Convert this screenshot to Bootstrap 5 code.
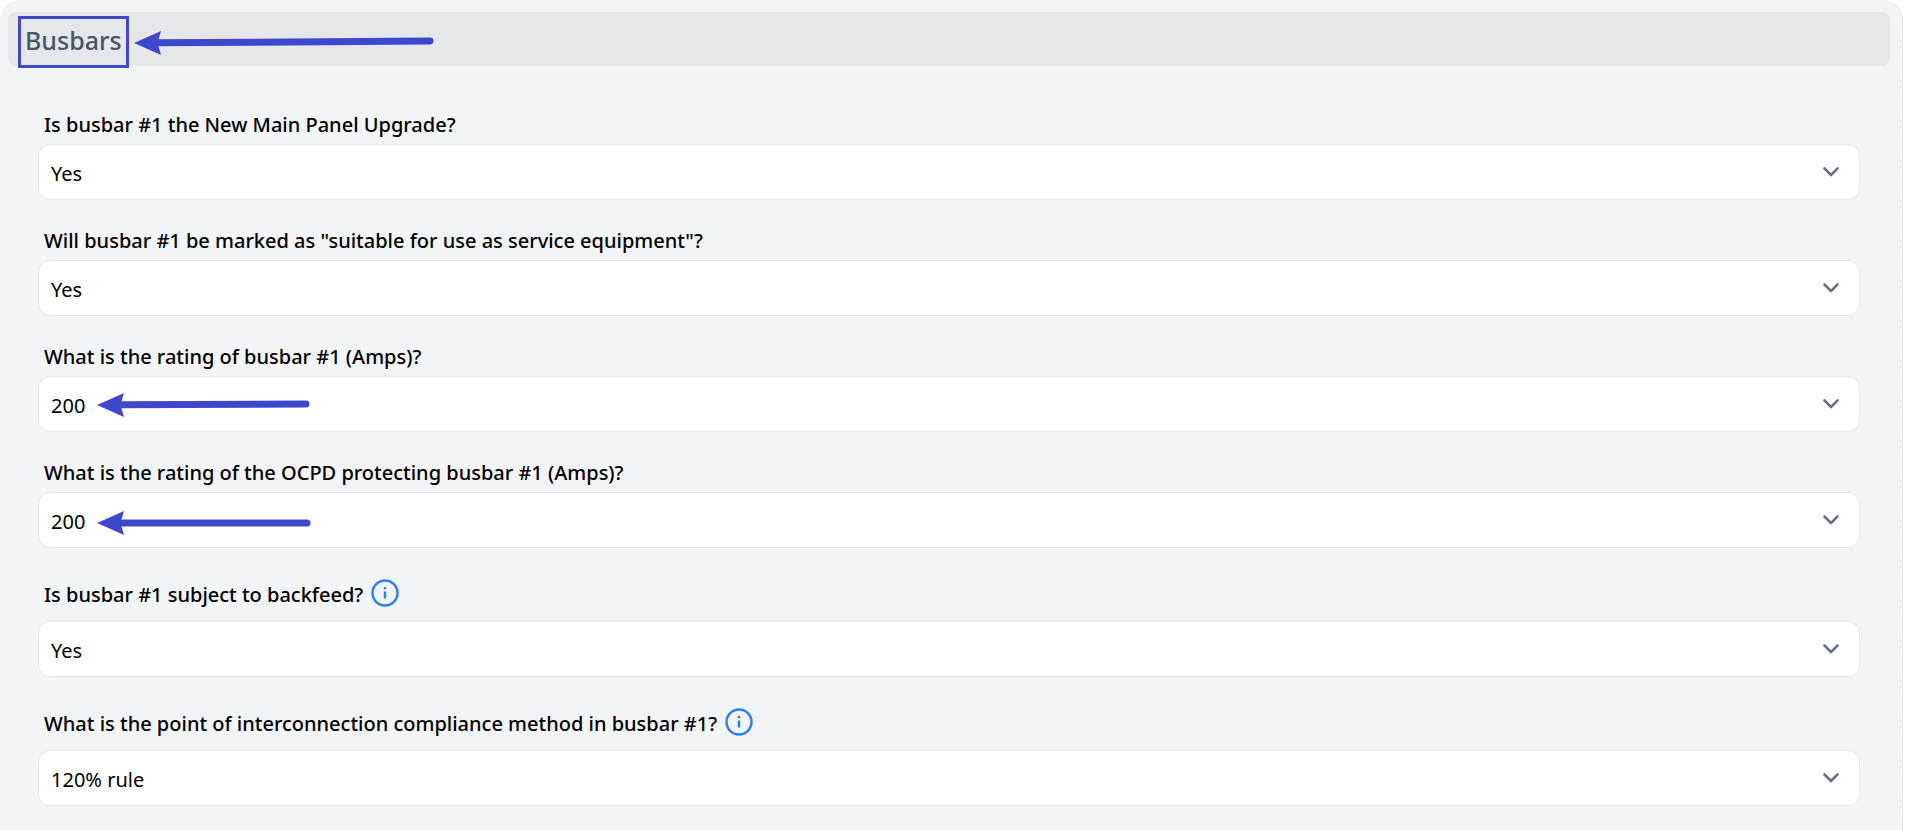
<!DOCTYPE html>
<html lang="en">
<head>
<meta charset="utf-8">
<meta name="viewport" content="width=device-width, initial-scale=1">
<title>Busbars</title>
<link href="https://cdn.jsdelivr.net/npm/bootstrap@5.3.0/dist/css/bootstrap.min.css" rel="stylesheet">
<style>
  body { background: #fff; color: #000; font-family: "Noto Sans", "Open Sans", sans-serif; font-size: 20px; }
  .panel { margin-right: 6px; padding: 12px 12px 24px 8px; min-height: 100vh; background: #f3f4f6; border-right: 1px dashed #dfe1e6; border-radius: 20px 20px 0 0; }
  .panel-head { height: 54px; background: #e5e7eb; border-radius: 8px; padding-left: 10px; }
  .panel-title { height: 52px; padding: 0 4px; border: 3px solid #3f48cc; color: #4b5563; font-size: 25px; line-height: 42px; font-weight: 500; }
  .fields { padding: 45px 30px 0; gap: 27px; }
  .field-label { padding-left: 6px; line-height: 28px; margin-bottom: 5px; font-weight: 500; }
  .with-info .field-label { line-height: 40px; }
  .with-info .label-row { margin-bottom: 1px; }
  .info-btn { width: 28px; height: 28px; }
  .field-select { height: 56px; padding: 4px 48px 0 12px; border: 1px solid #e5e7eb; border-radius: 12px; color: #000; font-size: 20px; line-height: 28px;
    background: #fff url("data:image/svg+xml,%3Csvg xmlns='http://www.w3.org/2000/svg' viewBox='0 0 18 12'%3E%3Cpath d='M2.500 2.500l6.500 6.500 6.500-6.500' fill='none' stroke='%236b7280' stroke-width='2.600' stroke-linecap='round' stroke-linejoin='round'/%3E%3C/svg%3E") no-repeat right 19px center / 18px 12px; }
  .pointer { position: absolute; left: 58px; top: 16px; pointer-events: none; }
  .arrow { fill: #3f48cc; stroke: #3f48cc; }
</style>
</head>
<body>
<main class="panel">
  <header class="panel-head d-flex align-items-start pt-1">
    <h1 class="panel-title mb-0">Busbars</h1>
    <svg class="arrow ms-1 mt-2" width="302" height="32" viewBox="0 0 302 32" aria-hidden="true"><path d="M1 19L28 7 24.500 19 28 31z" stroke="none"/><path d="M23 18.800L297 17" stroke-width="7" stroke-linecap="round"/></svg>
  </header>
  <form class="fields d-flex flex-column">
    <div>
      <label class="field-label d-block" for="upgrade">Is busbar #1 the New Main Panel Upgrade?</label>
      <select class="form-select field-select" id="upgrade"><option>Yes</option><option>No</option></select>
    </div>
    <div>
      <label class="field-label d-block" for="marked">Will busbar #1 be marked as "suitable for use as service equipment"?</label>
      <select class="form-select field-select" id="marked"><option>Yes</option><option>No</option></select>
    </div>
    <div>
      <label class="field-label d-block" for="rating">What is the rating of busbar #1 (Amps)?</label>
      <div class="position-relative">
        <select class="form-select field-select" id="rating"><option>200</option></select>
        <svg class="arrow pointer" width="216" height="26" viewBox="0 0 216 26" aria-hidden="true"><path d="M1 13L28 1 24.500 13 28 25z" stroke="none"/><path d="M23 12.800L210 12" stroke-width="7" stroke-linecap="round"/></svg>
      </div>
    </div>
    <div>
      <label class="field-label d-block" for="ocpd">What is the rating of the OCPD protecting busbar #1 (Amps)?</label>
      <div class="position-relative">
        <select class="form-select field-select" id="ocpd"><option>200</option></select>
        <svg class="arrow pointer" width="216" height="30" viewBox="0 0 216 30" aria-hidden="true"><path d="M1 15L28 3 24.500 15 28 27z" stroke="none"/><path d="M23 15H211" stroke-width="7" stroke-linecap="round"/></svg>
      </div>
    </div>
    <div class="with-info">
      <div class="label-row d-flex align-items-start gap-2">
        <label class="field-label" for="backfeed">Is busbar #1 subject to backfeed?</label>
        <button class="info-btn btn p-0 border-0 d-flex mt-1" type="button" aria-label="About backfeed"><svg width="28" height="28" viewBox="0 0 28 28" fill="none" stroke="#2b7fff" stroke-width="2.400"><circle cx="14" cy="14" r="12.500"/><path d="M14 12.500V19.500M14 8V10.300"/></svg></button>
      </div>
      <select class="form-select field-select" id="backfeed"><option>Yes</option><option>No</option></select>
    </div>
    <div class="with-info">
      <div class="label-row d-flex align-items-start gap-2">
        <label class="field-label" for="method">What is the point of interconnection compliance method in busbar #1?</label>
        <button class="info-btn btn p-0 border-0 d-flex mt-1" type="button" aria-label="About the compliance method"><svg width="28" height="28" viewBox="0 0 28 28" fill="none" stroke="#2b7fff" stroke-width="2.400"><circle cx="14" cy="14" r="12.500"/><path d="M14 12.500V19.500M14 8V10.300"/></svg></button>
      </div>
      <select class="form-select field-select" id="method"><option>120% rule</option></select>
    </div>
  </form>
</main>
<script src="https://cdn.jsdelivr.net/npm/bootstrap@5.3.0/dist/js/bootstrap.bundle.min.js"></script>
</body>
</html>
